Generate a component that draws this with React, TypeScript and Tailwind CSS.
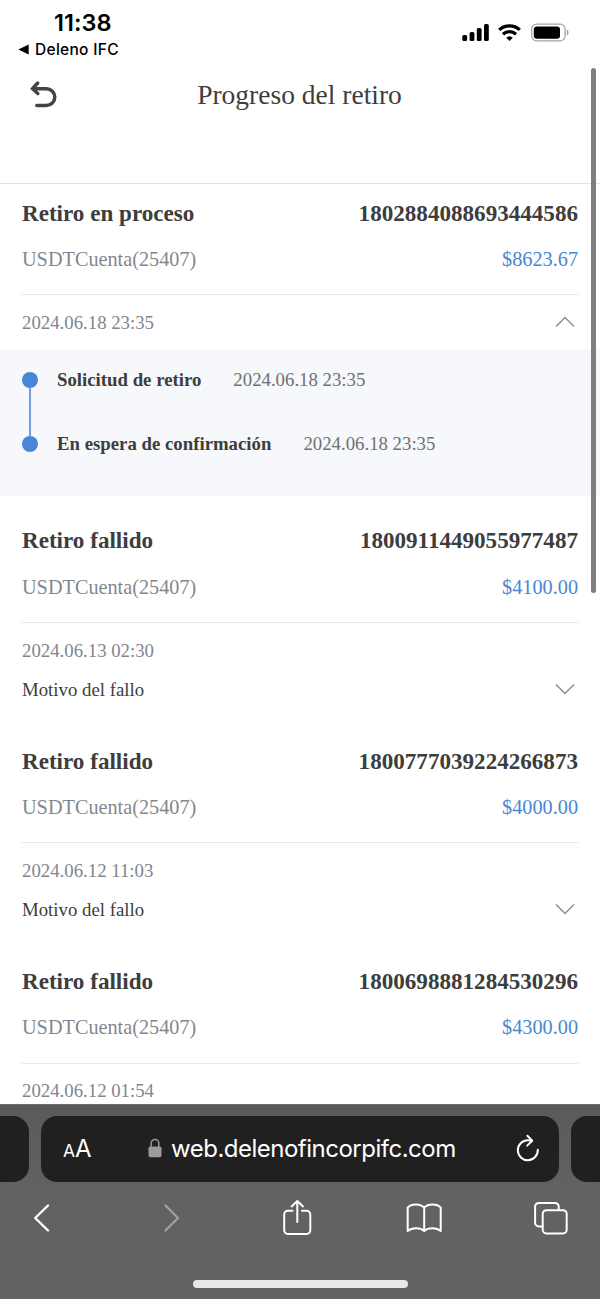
import type { ReactNode } from 'react';

type Paso = { titulo: string; fecha: string };

type Retiro = {
  id: string;
  estado: string;
  monto: string;
  fecha: string;
  motivo?: string;
  pasos?: Paso[];
};

const CUENTA = 'USDTCuenta(25407)';

const retiros: Retiro[] = [
  {
    id: '1802884088693444586',
    estado: 'Retiro en proceso',
    monto: '$8623.67',
    fecha: '2024.06.18 23:35',
    pasos: [
      { titulo: 'Solicitud de retiro', fecha: '2024.06.18 23:35' },
      { titulo: 'En espera de confirmación', fecha: '2024.06.18 23:35' },
    ],
  },
  {
    id: '1800911449055977487',
    estado: 'Retiro fallido',
    monto: '$4100.00',
    fecha: '2024.06.13 02:30',
    motivo: 'Motivo del fallo',
  },
  {
    id: '1800777039224266873',
    estado: 'Retiro fallido',
    monto: '$4000.00',
    fecha: '2024.06.12 11:03',
    motivo: 'Motivo del fallo',
  },
  { id: '1800698881284530296', estado: 'Retiro fallido', monto: '$4300.00', fecha: '2024.06.12 01:54' },
];

function Chevron({ abierto = false }: { abierto?: boolean }) {
  return (
    <svg width="20" height="12" viewBox="0 0 20 12" fill="none" stroke="#8f8f91" strokeWidth="1.5" className="mb-[2px] mr-[3px]">
      <path d={abierto ? 'M1 10.5 10 1.5l9 9' : 'M1 1.5l9 9 9-9'} />
    </svg>
  );
}

function StatusBar() {
  return (
    <div className="flex h-[66px] shrink-0 justify-between font-['Inter',sans-serif] text-black">
      <div className="pl-[18px] pt-[9px]">
        <div className="pl-[36px] text-[23.5px] font-semibold leading-[27px] tracking-[0.05px]">11:38</div>
        <div className="flex items-center gap-[6px] pt-[4px] text-[15.5px] font-medium leading-[19px] tracking-[0.3px]">
          <svg width="11" height="11" viewBox="0 0 11 11">
            <path d="M.3 5.5 10.7.4v10.2z" />
          </svg>
          Deleno IFC
        </div>
      </div>
      <div className="flex items-start gap-[9px] pr-[31px] pt-[23px]">
        <svg width="28" height="19" viewBox="0 0 28 19">
          <rect x="0.3" y="11.9" width="4.8" height="6.2" rx="1.6" />
          <rect x="7.6" y="9" width="4.8" height="9.1" rx="1.6" />
          <rect x="14.8" y="5" width="4.8" height="13.1" rx="1.6" />
          <rect x="22" y="1" width="4.8" height="17.1" rx="1.6" />
        </svg>
        <svg width="24" height="19" viewBox="0 0 24 19" fill="none" stroke="#000" strokeWidth="3.3" className="-ml-[1px]">
          <path d="M1.2 6.9a15.2 15.2 0 0 1 20.6 0" />
          <path d="M5 11.2a9.5 9.5 0 0 1 13 0" />
          <path d="M11.5 18 8.2 14.8a4.8 4.8 0 0 1 6.6 0z" fill="#000" stroke="none" />
        </svg>
        <svg width="38" height="19" viewBox="0 0 38 19">
          <rect x="0.7" y="1.2" width="33.4" height="16.6" rx="5" fill="none" stroke="#a4a4a4" strokeWidth="1.3" />
          <rect x="2.8" y="3.4" width="26.2" height="12.3" rx="3" />
          <path d="M35.7 6.6c2.5.9 2.5 5 0 5.9z" fill="#a4a4a4" />
        </svg>
      </div>
    </div>
  );
}

function Header() {
  return (
    <header className="flex h-[118px] shrink-0 items-start border-b border-[#e2e2e4]">
      <div className="w-[100px] pl-[29px] pt-[14px]">
        <svg width="30" height="30" viewBox="0 0 30 30" fill="none" stroke="#444444" strokeWidth="3.5" strokeLinecap="round">
          <path d="M8.7 3 3.6 8.6l5.2 4.9" />
          <path d="M4 8.7h13.4a8.4 8.4 0 0 1 0 16.8H7.8" />
        </svg>
      </div>
      <h1 className="flex-1 pt-[13px] text-center text-[27.5px] leading-[32px]">Progreso del retiro</h1>
      <div className="w-[101px]" />
    </header>
  );
}

function Timeline({ pasos }: { pasos: Paso[] }) {
  return (
    <div className="h-[147px] bg-[#f7f8fc] pl-[22px]">
      {pasos.map((p, i) => (
        <div key={p.titulo} className="flex h-[64px] text-[18.8px]">
          <div className="flex w-[16px] flex-col items-center">
            <div className={i === 0 ? 'h-[23px]' : 'h-[23px] w-[2px] bg-[#6f9fdc]'} />
            <div className="size-[16px] shrink-0 rounded-full bg-[#4787d6]" />
            {i < pasos.length - 1 && <div className="w-[2px] flex-1 bg-[#6f9fdc]" />}
          </div>
          <div className="flex h-[62px] items-center pl-[19px]">
            <span className="font-bold">{p.titulo}</span>
            <span className="pl-[32px] text-[#6e7074]">{p.fecha}</span>
          </div>
        </div>
      ))}
    </div>
  );
}

function RetiroItem({ retiro }: { retiro: Retiro }) {
  const { id, estado, monto, fecha, motivo, pasos } = retiro;
  return (
    <section className={pasos ? 'h-[327.8px] shrink-0' : 'h-[220.4px] shrink-0'}>
      <div className="mx-[22px] border-b border-[#e6e7ef] pb-[12px] pt-[6px]">
        <div className="flex h-[46px] items-center justify-between text-[23.1px] font-bold">
          <span>{estado}</span>
          <span>{id}</span>
        </div>
        <div className="flex h-[46px] items-center justify-between text-[20.25px]">
          <span className="text-[#84888d]">{CUENTA}</span>
          <span className="text-[#4787d6]">{monto}</span>
        </div>
      </div>
      <div className="mx-[22px] flex h-[54px] items-center justify-between pt-[2px] text-[18.8px] text-[#7f868f]">
        <span>{fecha}</span>
        {pasos && <Chevron abierto />}
      </div>
      {pasos && <Timeline pasos={pasos} />}
      {motivo && (
        <div className="mx-[22px] flex h-[26px] items-center justify-between text-[18.8px]">
          <span>{motivo}</span>
          <Chevron />
        </div>
      )}
    </section>
  );
}

function ToolIcon({ children, className = '' }: { children: ReactNode; className?: string }) {
  return (
    <svg
      width="40"
      height="40"
      viewBox="0 0 40 40"
      fill="none"
      stroke="#fff"
      strokeWidth="2"
      strokeLinecap="round"
      strokeLinejoin="round"
      className={className}
    >
      {children}
    </svg>
  );
}

function BrowserBar() {
  return (
    <footer className="h-[195px] shrink-0 border-t border-[#6c6d6d] bg-linear-to-b from-[#595a5a] to-[#616262] to-45% font-['Inter',sans-serif] text-white">
      <div className="flex h-[77px] gap-[12px] pt-[11px]">
        <div className="h-[66px] w-[29px] rounded-r-[16px] bg-[#202020]" />
        <div className="flex h-[66px] w-[518px] items-center rounded-[16px] bg-[#202020] pl-[22px]">
          <div className="flex w-[85px] items-baseline">
            <span className="text-[17.5px]">A</span>
            <span className="text-[24px]">A</span>
          </div>
          <svg width="14" height="20" viewBox="0 0 14 20" className="mb-[2px]">
            <path d="M3.2 9V5.2a3.8 3.8 0 0 1 7.6 0V9" fill="none" stroke="#9a9a9e" strokeWidth="1.5" />
            <rect x="0.5" y="8.5" width="13" height="10.7" rx="1.8" fill="#9a9a9e" />
          </svg>
          <span className="w-[354px] pl-[9px] text-[24px] tracking-[-0.5px]">web.delenofincorpifc.com</span>
          <svg
            width="24"
            height="28"
            viewBox="0 0 24 28"
            fill="none"
            stroke="#fff"
            strokeWidth="2"
            strokeLinecap="round"
            strokeLinejoin="round"
            className="mb-[3px]"
          >
            <path d="M21.8 15.8A10 10 0 1 1 11.8 6.2c1.5 0 3 .2 4.2.6" />
            <path d="m11.4 1.8 4.8 5-5 4.8" />
          </svg>
        </div>
        <div className="h-[66px] w-[29px] rounded-l-[16px] bg-[#202020]" />
      </div>
      <div className="flex h-[72px] items-center justify-between pl-[22px] pr-[29px]">
        <ToolIcon>
          <path d="M26 7.5 13.2 20 26 32.5" strokeWidth="2.4" />
        </ToolIcon>
        <ToolIcon className="opacity-40">
          <path d="M16.5 7.5 29 20 16.5 32.5" strokeWidth="2.2" />
        </ToolIcon>
        <ToolIcon>
          <path d="M15.5 12.8h-4.7a3.6 3.6 0 0 0-3.6 3.6v15.9a3.6 3.6 0 0 0 3.6 3.6h18.9a3.6 3.6 0 0 0 3.6-3.6V16.4a3.6 3.6 0 0 0-3.6-3.6H25" />
          <path d="M20.3 24V3M14.6 8.4 20.3 3 26 8.4" />
        </ToolIcon>
        <ToolIcon>
          <path d="M20.2 9.5C16 5.3 7.5 5.5 3.7 9.5V33c4-3.5 12.5-3.7 16.5 0 4-3.7 12.5-3.5 16.5 0V9.5c-3.8-4-12.3-4.2-16.5 0zM20.2 9.5V33" />
        </ToolIcon>
        <ToolIcon>
          <path d="M11.5 28.5H7.8A3.7 3.7 0 0 1 4.1 24.8V8.6a3.7 3.7 0 0 1 3.7-3.7H24A3.7 3.7 0 0 1 27.7 8.6v3.3" />
          <rect x="11.7" y="12.2" width="24" height="23.3" rx="3.7" />
        </ToolIcon>
      </div>
      <div className="mx-auto mt-[26px] h-[8px] w-[215px] rounded-full bg-[#e8e8e8]" />
    </footer>
  );
}

export default function App() {
  return (
    <div className="relative flex h-[1299px] w-[600px] flex-col overflow-hidden bg-white font-['Liberation_Serif',serif] text-[#3d3d3d]">
      <StatusBar />
      <Header />
      <main className="flex min-h-0 flex-1 flex-col overflow-hidden">
        {retiros.map((r) => (
          <RetiroItem key={r.id} retiro={r} />
        ))}
      </main>
      <BrowserBar />
      <div className="absolute left-[591px] top-[68px] h-[525px] w-[5px] rounded-full bg-[#7f7f80]" />
    </div>
  );
}
